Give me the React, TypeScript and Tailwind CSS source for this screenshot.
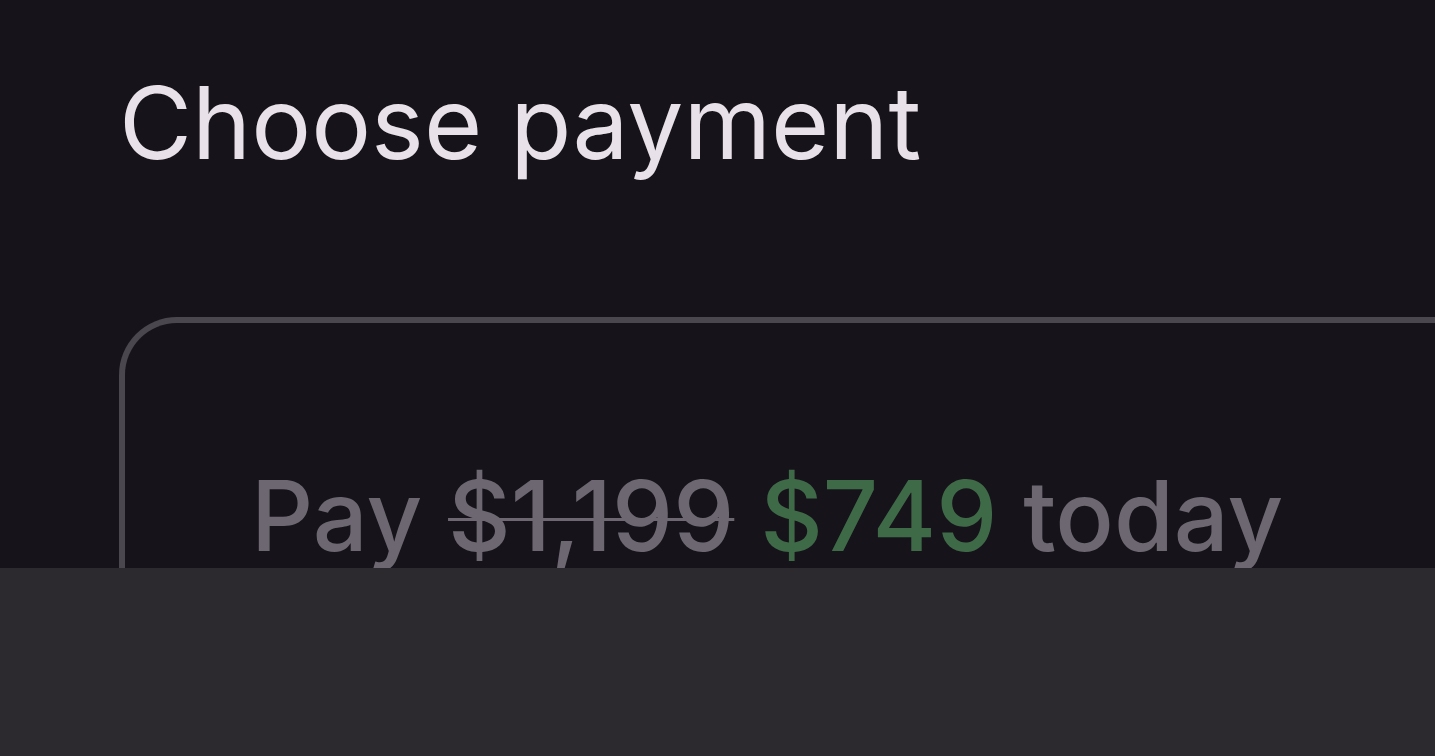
export default function App() {
  return (
    <div className="flex h-[756px] w-full flex-col overflow-hidden bg-[#16131a] font-['Inter',sans-serif]">
      <div className="h-[568px] overflow-hidden pl-[119px] pt-[73px]">
        <h1 className="text-[100px] font-normal leading-none text-[#e8e1ea]">
          Choose payment
        </h1>
        <div className="mt-[144px] h-[400px] rounded-tl-[58px] border-l-[6px] border-t-[6px] border-[#4a474e] pl-[126px] pt-[144px]">
          <p className="text-[97px] font-medium leading-none text-[#6c6771]">
            Pay <span className="line-through decoration-[3px]">$1,199</span>{' '}
            <span className="text-[#3f6a48]">$749</span> today
          </p>
        </div>
      </div>
      <div className="flex-1 bg-[#2c2a2f]" />
    </div>
  );
}
